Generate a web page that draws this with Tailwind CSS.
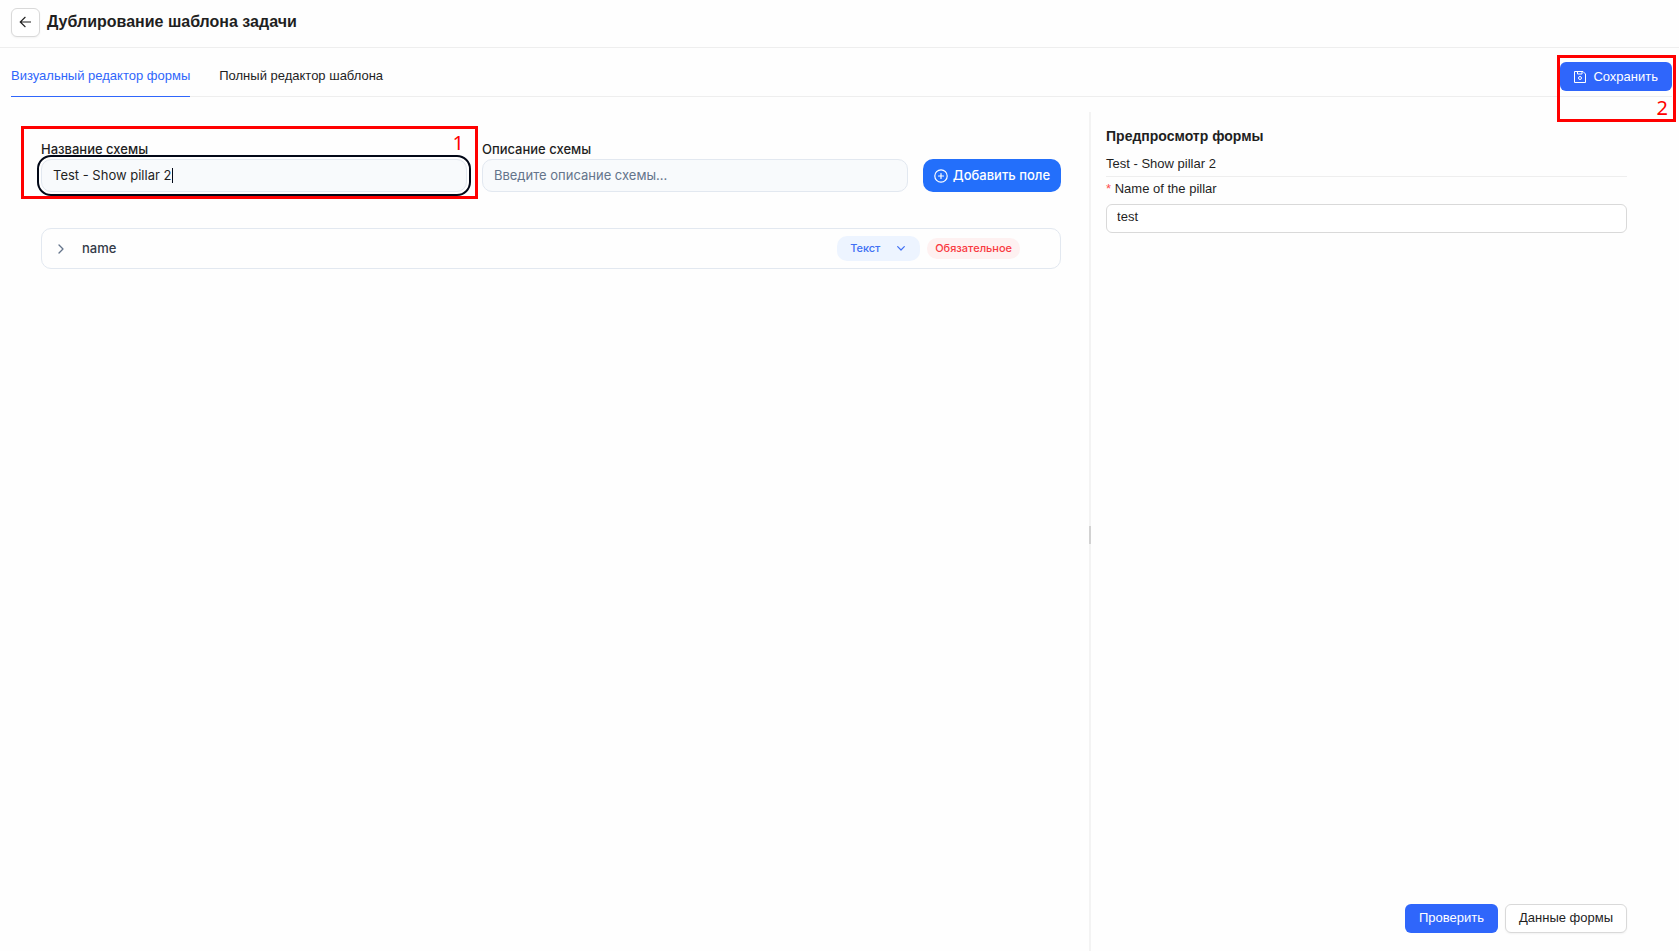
<!DOCTYPE html>
<html lang="ru">
<head>
  <meta charset="UTF-8" />
  <meta name="viewport" content="width=device-width, initial-scale=1.0"/>
  <title>Дублирование шаблона задачи</title>
  <script src="https://cdn.jsdelivr.net/npm/@tailwindcss/browser@4"></script>
</head>
<body class="flex flex-col min-h-screen bg-[#fefefe] text-[#1f1f1f] text-[13px] font-['Liberation_Sans',Arial,sans-serif]">

  <!-- Header -->
  <header class="flex items-center gap-[7px] h-12 px-[11px] pb-[3px] border-b border-[#eeeeee]">
    <button type="button" aria-label="Назад" class="flex items-center justify-center size-[29px] bg-white border border-[#d9d9d9] rounded-md shadow-xs">
      <svg class="w-[13px] h-[13px]" viewBox="0 0 13 13" fill="none" stroke="currentColor" stroke-width="1.1"><path d="M12 6H1.400M6.400 1 1.200 6l5.200 5"/></svg>
    </button>
    <h1 class="text-[16px] font-bold">Дублирование шаблона задачи</h1>
  </header>

  <!-- Tabs -->
  <div class="flex justify-between h-[49px] ml-[11px] mr-[7px] border-b border-[#eeeeee]">
    <nav class="flex gap-[29px] -mb-px">
      <a href="#visual" class="flex items-center pt-[7px] text-[#2f66fb] border-b border-[#2f66fb]">Визуальный редактор формы</a>
      <a href="#full" class="flex items-center pt-[7px] border-b border-transparent">Полный редактор шаблона</a>
    </nav>
    <div class="relative mt-[14px] h-[29px]">
      <button type="button" class="flex items-center gap-[7px] h-full px-[14px] bg-[#2f66fb] text-white rounded-md">
        <svg class="w-[12px] h-[12px]" viewBox="0 0 12 12" fill="none" stroke="currentColor"><path d="M.5.5h8.500l2.500 2.500v8.500H.5zM3.500.5v2.500h4.500V.5"/><circle cx="6" cy="7" r="1.500"/></svg>
        Сохранить
      </button>
      <div class="absolute -left-[3px] -right-[4px] -top-[7px] h-[67px] border-3 border-[#ff0000] pointer-events-none">
        <span class="absolute right-[5px] -bottom-px text-[20px] leading-6 text-[#ff0000] font-['Noto_Sans',sans-serif]">2</span>
      </div>
    </div>
  </div>

  <main class="flex flex-1 pt-[15px] px-[11px]">
    <!-- Schema editor -->
    <section id="visual" class="w-[65%] pl-[30px] pr-[27px] pt-[28px] font-['Inter',sans-serif]">
      <div class="flex items-end gap-[15px]">
        <div class="relative flex-1">
          <label for="schema-name" class="block h-[19px] leading-[18px] font-medium">Название схемы</label>
          <input id="schema-name" type="text" value="Test - Show pillar 2" class="block w-full h-[33px] px-[11px] pb-px bg-[#f8fafc] border border-[#e2e8f0] rounded-[10px] caret-transparent outline-2 outline-offset-2 outline-[#020817]" />
          <!-- Text cursor -->
          <span aria-hidden="true" class="absolute left-[131px] top-[28px] w-px h-[15px] bg-[#020817]"></span>
          <div class="absolute -left-5 -right-[11px] -top-[14px] h-[73px] border-3 border-[#ff0000] pointer-events-none">
            <span class="absolute right-[11px] top-[2px] text-[20px] leading-6 text-[#ff0000] font-['Noto_Sans',sans-serif]">1</span>
          </div>
        </div>
        <div class="flex-1">
          <label for="schema-description" class="block h-[19px] leading-[18px] font-medium">Описание схемы</label>
          <input id="schema-description" type="text" placeholder="Введите описание схемы..." class="block w-full h-[33px] px-[11px] pb-px bg-[#f8fafc] border border-[#e2e8f0] rounded-[10px] placeholder:text-[#64748b]" />
        </div>
        <button type="button" class="flex items-center gap-[5px] h-[33px] px-[11px] bg-[#236ffb] text-white font-medium rounded-[10px]">
          <svg class="w-[14px] h-[14px]" viewBox="0 0 14 14" fill="none" stroke="currentColor" stroke-width="1.200" stroke-linecap="round"><circle cx="7" cy="7" r="6.200"/><path d="M4.500 7h5M7 4.500v5"/></svg>
          Добавить поле
        </button>
      </div>

      <div class="flex items-center h-[41px] mt-9 pl-[13px] pr-10 border border-[#e2e8f0] rounded-[10px]">
        <button type="button" aria-label="Развернуть" class="flex items-center justify-center w-3 h-5 text-[#64748b]">
          <svg class="w-[6px] h-[10px]" viewBox="0 0 6 10" fill="none" stroke="currentColor" stroke-width="1.300" stroke-linecap="round" stroke-linejoin="round"><path d="M1 1l4 4-4 4"/></svg>
        </button>
        <span class="ml-[15px] font-medium text-[#333a48]">name</span>
        <div class="relative ml-auto">
          <select aria-label="Тип поля" class="appearance-none block w-[83px] h-[25px] pl-[13px] pb-px bg-[#edf4ff] text-[#4070f4] text-[11px] font-medium rounded-[10px]">
            <option>Текст</option>
          </select>
          <svg class="absolute right-[15px] top-[10px] w-[8px] h-[5px] text-[#4070f4] pointer-events-none" viewBox="0 0 8 5" fill="none" stroke="currentColor" stroke-width="1.200" stroke-linecap="round" stroke-linejoin="round"><path d="M.7.7 4 4l3.300-3.300"/></svg>
        </div>
        <span class="ml-[7px] h-[21px] px-2 leading-[20px] bg-[#fef1f1] text-[#f93a42] text-[11px] font-medium rounded-[10px]">Обязательное</span>
      </div>
    </section>

    <!-- Splitter -->
    <div role="separator" aria-orientation="vertical" class="flex items-center w-[2px] ml-px pt-[6px] bg-[#f3f3f3]">
      <div class="w-full h-[18px] bg-[#d2d2d2]"></div>
    </div>

    <!-- Preview -->
    <form class="flex flex-col flex-1 pl-[15px] pr-[41px] pt-[14px] pb-[18px]">
      <h2 class="h-[20px] leading-[20px] text-[14px] font-bold">Предпросмотр формы</h2>
      <p class="h-[31px] pt-[8px] leading-[20px] border-b border-[#eeeeee]">Test - Show pillar 2</p>
      <label for="pillar-name" class="mt-[2px] leading-[20px]"><span class="text-[#ff4d4f]">*</span> Name of the pillar</label>
      <input id="pillar-name" type="text" value="test" class="h-[29px] mt-[5px] px-[10px] pb-[4px] bg-white border border-[#d9d9d9] rounded-md" />
      <div class="flex justify-end gap-[7px] mt-auto">
        <button type="submit" class="h-[29px] px-[14px] pb-[2px] bg-[#2f66fb] text-white rounded-md">Проверить</button>
        <button type="button" class="h-[29px] px-[13px] pb-[2px] bg-white border border-[#d9d9d9] rounded-md shadow-xs">Данные формы</button>
      </div>
    </form>
  </main>

</body>
</html>
